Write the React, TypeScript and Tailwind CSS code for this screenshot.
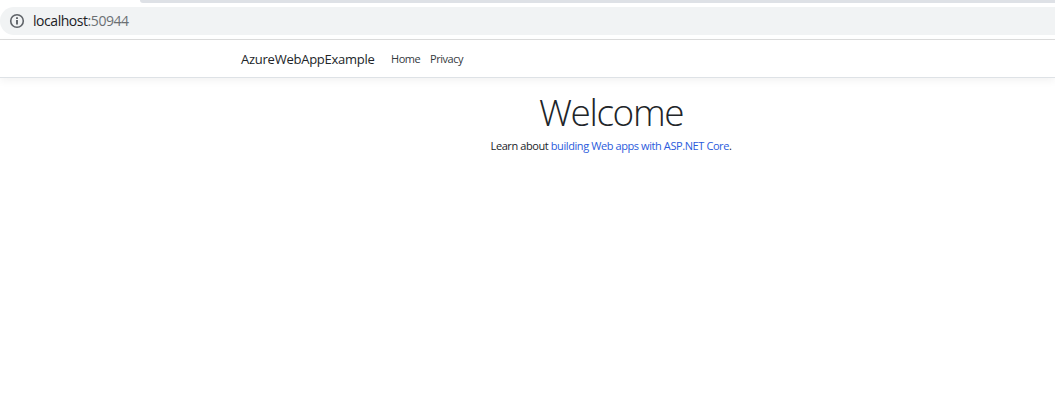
import React from "react";

function BrowserBar() {
  return (
    <div className="h-10 border-b border-[#dcdcdc] bg-white">
      <div className="ml-[140px] h-[3px] rounded-bl-[6px] bg-[#dee1e6]" />
      <div className="mt-1 flex h-7 items-center rounded-l-full bg-[#f1f3f4] pl-[9px]">
        <svg width="16" height="16" viewBox="0 0 16 16" fill="none" stroke="#5f6368">
          <circle cx="8" cy="8" r="6.3" strokeWidth="1.6" />
          <path d="M8 7v4.5M8 4.2v1.8" strokeWidth="1.9" />
        </svg>
        <span className="ml-2 text-[14px] leading-5 tracking-[-0.45px] text-[#202124]">
          localhost<span className="text-[#6b6f73]">:50944</span>
        </span>
      </div>
    </div>
  );
}

function Navbar() {
  return (
    <nav className="flex h-[38px] items-center border-b border-[#dee2e6] bg-white pl-[241px] shadow-[0_3px_8px_rgba(0,0,0,0.05)]">
      <a className="w-[150px] text-[13px] leading-5 tracking-[-0.25px] text-[#212529]">AzureWebAppExample</a>
      <a className="w-[39px] text-[11px] leading-5 tracking-[-0.45px] text-[#343a40]">Home</a>
      <a className="text-[11px] leading-5 tracking-[-0.45px] text-[#343a40]">Privacy</a>
    </nav>
  );
}

export default function App() {
  return (
    <div className="h-[417px] w-[1055px] overflow-hidden bg-white font-['Open_Sans','Noto_Sans',sans-serif]">
      <BrowserBar />
      <Navbar />
      <main className="ml-[241px] w-[740px] pt-[11px] text-center text-[#212529]">
        <h1 className="text-[37px] leading-[46px] font-light tracking-[-1.4px]">Welcome</h1>
        <p className="mt-px text-[11px] leading-5 tracking-[-0.41px]">
          Learn about <a className="text-[#2b5bdc]">building Web apps with ASP.NET Core</a>.
        </p>
      </main>
    </div>
  );
}
